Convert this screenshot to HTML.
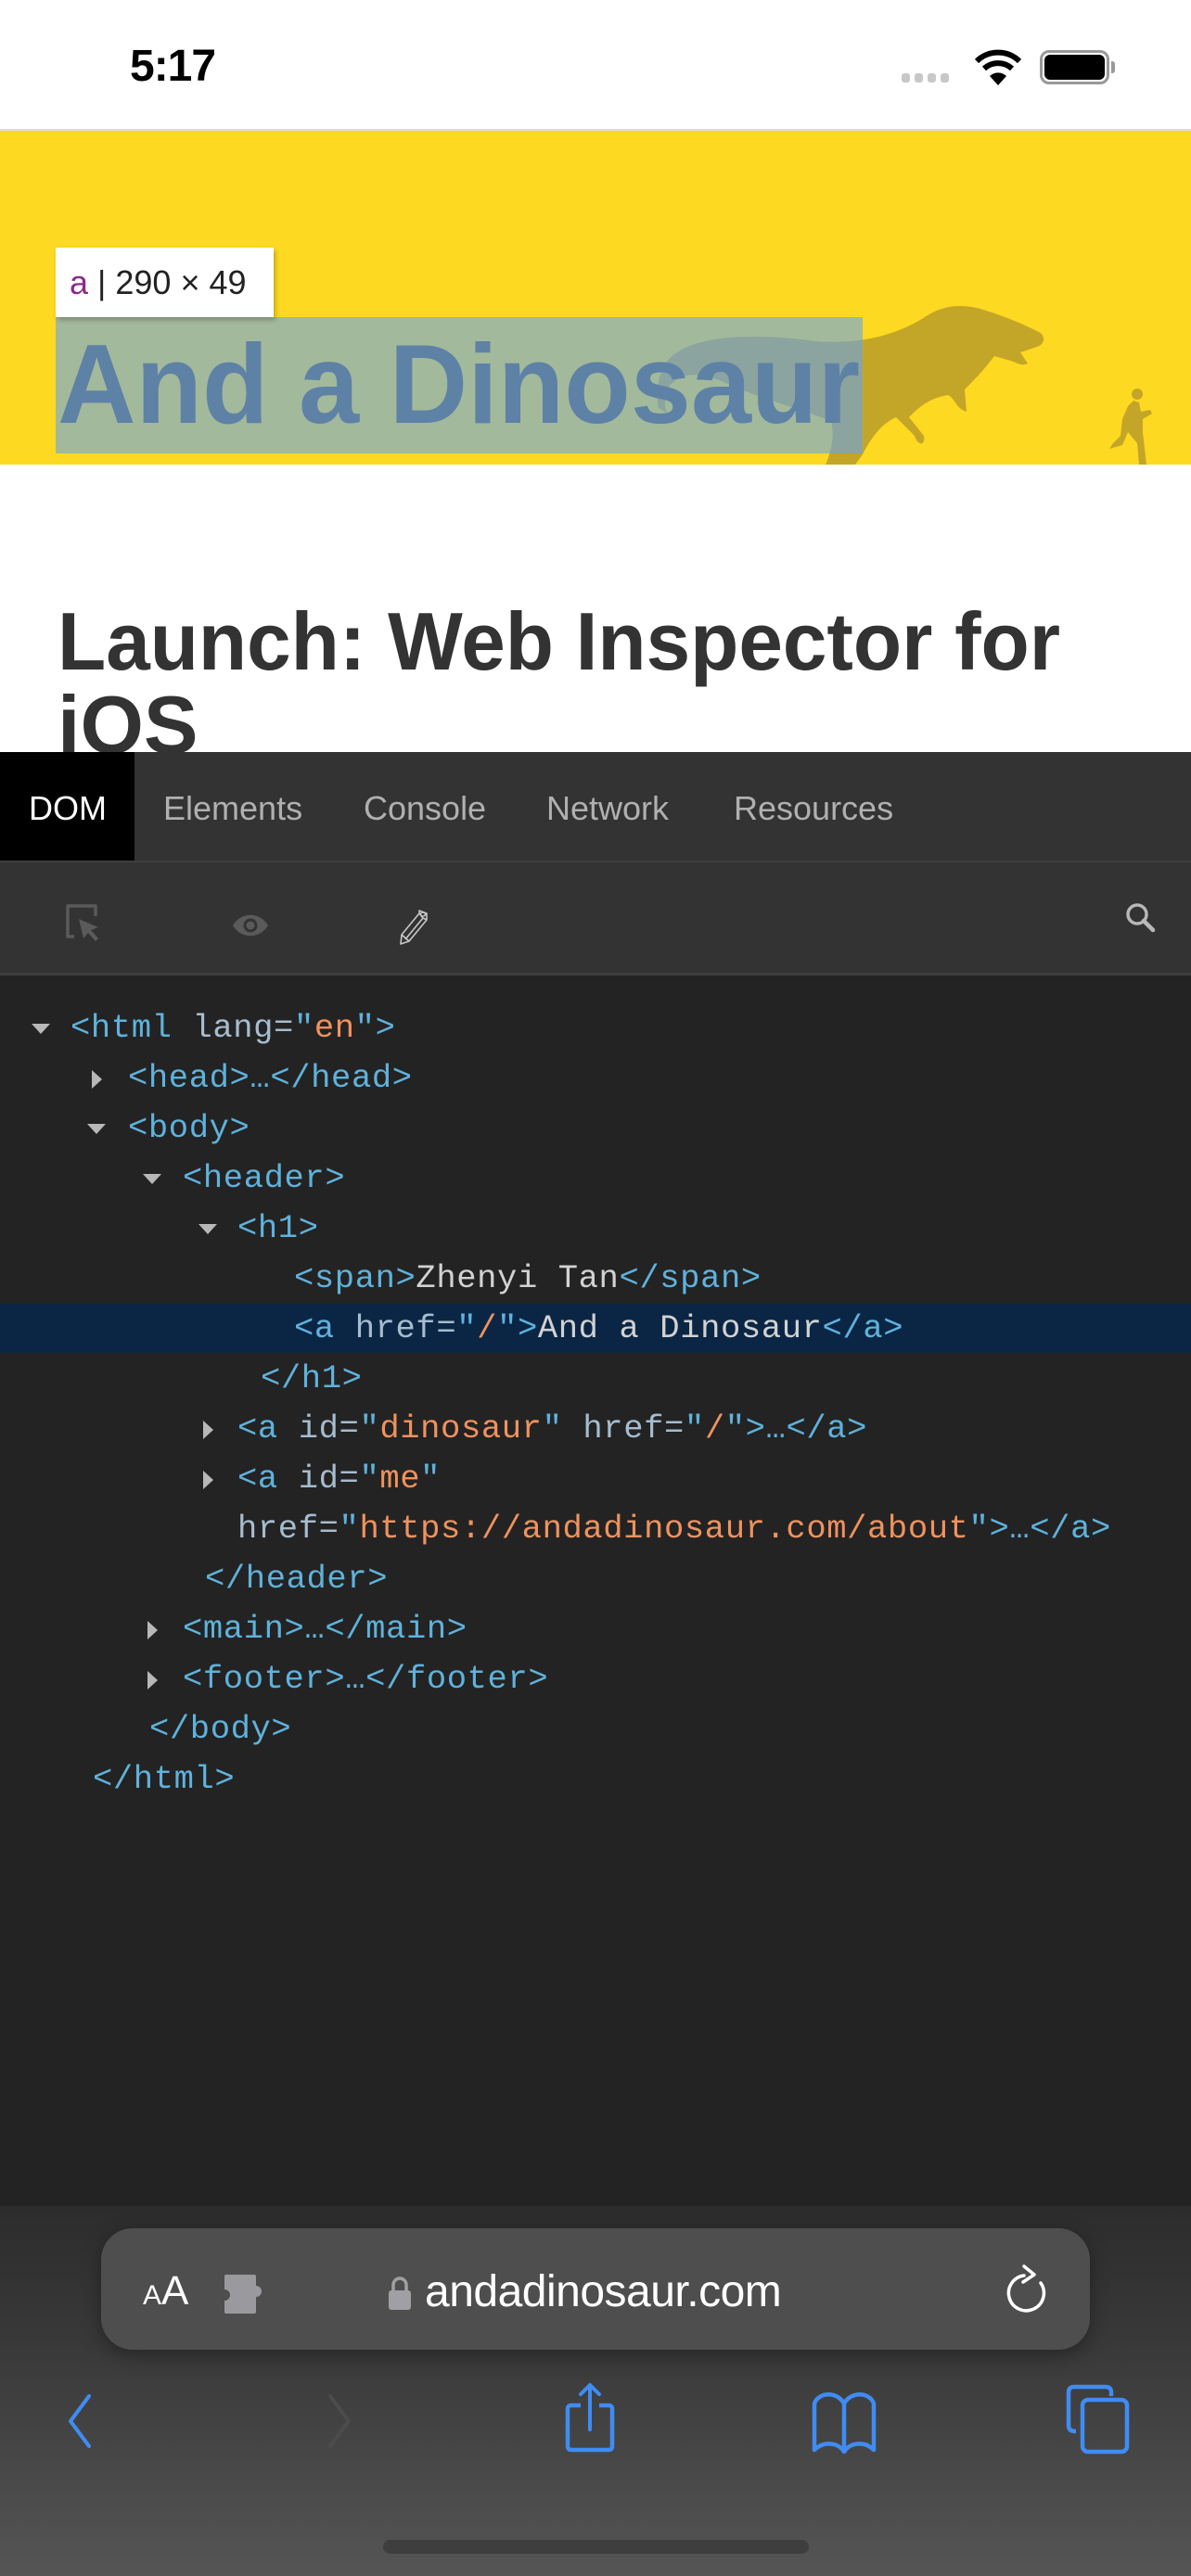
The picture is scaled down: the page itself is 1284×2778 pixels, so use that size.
<!DOCTYPE html>
<html><head><meta charset="utf-8">
<style>
*{margin:0;padding:0;box-sizing:border-box}
body{width:1284px;height:2778px;position:relative;overflow:hidden;background:#fff;font-family:"Liberation Sans",sans-serif}
.abs{position:absolute}
.mono{font-family:"Liberation Mono",monospace;font-size:35.5px;letter-spacing:0.6px;white-space:pre;color:#5fb2dc;position:absolute;line-height:54px}
.t{color:#5fb2dc}.n{color:#a6bccf}.v{color:#f0925e}.x{color:#d2d2d2}
.tri{position:absolute;width:0;height:0}
.down{border-left:10px solid transparent;border-right:10px solid transparent;border-top:11px solid #b8b8b8}
.right{border-top:10px solid transparent;border-bottom:10px solid transparent;border-left:11px solid #b8b8b8}
</style></head><body>
<!-- status bar -->
<div class="abs" style="left:140px;top:44px;font-size:48px;font-weight:bold;color:#000;letter-spacing:-1px">5:17</div>
<div class="abs" style="left:972px;top:79px;width:9px;height:10px;border-radius:3px;background:#c8c8c8"></div>
<div class="abs" style="left:986px;top:79px;width:9px;height:10px;border-radius:3px;background:#c8c8c8"></div>
<div class="abs" style="left:1000px;top:79px;width:9px;height:10px;border-radius:3px;background:#c8c8c8"></div>
<div class="abs" style="left:1014px;top:79px;width:9px;height:10px;border-radius:3px;background:#c8c8c8"></div>
<svg class="abs" style="left:1050px;top:52px" width="52" height="40" viewBox="0 0 52 40"><path d="M3 14 A33 33 0 0 1 49 14" stroke="#000" stroke-width="6" fill="none"/><path d="M11 22 A22 22 0 0 1 41 22" stroke="#000" stroke-width="6" fill="none"/><path d="M26 40 L17 30 A13 13 0 0 1 35 30 Z" fill="#000"/></svg>
<div class="abs" style="left:1121px;top:54px;width:75px;height:37px;border:3px solid #999;border-radius:10px"></div>
<div class="abs" style="left:1126px;top:59px;width:65px;height:27px;background:#000;border-radius:6px"></div>
<div class="abs" style="left:1198px;top:66px;width:4px;height:13px;background:#999;border-radius:0 3px 3px 0"></div>

<!-- yellow header -->
<div class="abs" style="left:0;top:139px;width:1284px;height:2px;background:#ddd"></div>
<div class="abs" style="left:0;top:141px;width:1284px;height:360px;background:#fed921"></div>
<svg class="abs" style="left:700px;top:320px" width="584" height="181" viewBox="0 0 584 181">
<path d="M30 60 C60 40 120 40 180 48 C230 52 270 40 300 20 C320 8 340 8 360 14 C380 20 400 28 420 38 C428 42 426 52 418 54 L400 60 L408 72 C400 76 396 70 386 68 L372 64 C360 80 350 90 340 100 L342 124 C330 120 330 110 322 106 C300 110 290 120 280 130 L296 150 C298 160 290 162 286 150 L266 130 C252 136 240 150 230 170 L222 181 L190 181 C196 168 200 150 196 134 C160 120 120 110 80 92 C56 82 36 80 22 96 C18 110 14 118 20 126 L10 120 C6 100 10 72 30 60Z" fill="#c3a628"/>
<path d="M528 181 L526 158 L516 146 L510 160 L496 164 L500 158 L508 150 L510 132 L516 118 L522 112 L528 114 L530 124 L540 122 L542 126 L532 132 L532 146 L536 181Z" fill="#c3a628"/>
<circle cx="526" cy="105" r="6" fill="#c3a628"/>
</svg>
<div class="abs" style="left:60px;top:342px;width:870px;height:147px;background:rgba(101,164,238,0.6)"></div>
<svg class="abs" style="left:60px;top:342px" width="870" height="147"><text x="2" y="114" font-family="Liberation Sans" font-weight="bold" font-size="122" fill="#5e82a6" textLength="865" lengthAdjust="spacingAndGlyphs">And a Dinosaur</text></svg>
<div class="abs" style="left:60px;top:267px;width:235px;height:75px;background:#fff;box-shadow:2px 3px 5px rgba(0,0,0,0.25)"></div>
<div class="abs" style="left:75px;top:284px;font-size:36px;color:#222;white-space:pre"><span style="color:#8a2a8a">a</span> | 290 × 49</div>

<!-- article heading -->
<svg class="abs" style="left:0;top:600px" width="1284" height="212"><text x="62" y="122" font-family="Liberation Sans" font-weight="bold" font-size="88" fill="#333" textLength="1081" lengthAdjust="spacingAndGlyphs">Launch: Web Inspector for</text><text x="62" y="212" font-family="Liberation Sans" font-weight="bold" font-size="88" fill="#333">iOS</text></svg>

<!-- tab bar -->
<div class="abs" style="left:0;top:811px;width:1284px;height:119px;background:#333"></div>
<div class="abs" style="left:0;top:811px;width:145px;height:117px;background:#000"></div>
<div class="abs" style="left:0;top:928px;width:1284px;height:2px;background:#3e3e3e"></div>
<div class="abs" style="left:31px;top:851px;font-size:36px;color:#fff">DOM</div>
<div class="abs" style="left:176px;top:851px;font-size:36px;color:#b0b0b0">Elements</div>
<div class="abs" style="left:392px;top:851px;font-size:36px;color:#b0b0b0">Console</div>
<div class="abs" style="left:589px;top:851px;font-size:36px;color:#b0b0b0">Network</div>
<div class="abs" style="left:791px;top:851px;font-size:36px;color:#b0b0b0">Resources</div>

<!-- toolbar -->
<div class="abs" style="left:0;top:930px;width:1284px;height:119px;background:#333"></div>
<div class="abs" style="left:0;top:1049px;width:1284px;height:3px;background:#3d3d3d"></div>
<svg class="abs" style="left:70px;top:974px" width="42" height="44" viewBox="0 0 42 44"><path d="M10 36 H3 V3 H33 V14" stroke="#5a5a5a" stroke-width="3.5" fill="none" stroke-linejoin="round"/><path d="M15 17 L36 26 L28 29 L36 38 L33 41 L25 32 L20 38Z" fill="#5a5a5a"/></svg>
<svg class="abs" style="left:250px;top:981px" width="40" height="34" viewBox="0 0 40 34"><path d="M1 17 C10 2 30 2 39 17 C30 32 10 32 1 17Z" fill="#5a5a5a"/><circle cx="20" cy="17" r="7.5" fill="#333"/><circle cx="20" cy="17" r="4.5" fill="#5a5a5a"/></svg>
<svg class="abs" style="left:430px;top:980px" width="34" height="40" viewBox="0 0 34 40"><g stroke="#c8c8c8" stroke-width="1.6" fill="none" stroke-linejoin="round"><path d="M22 2 L30 5 L30 12 L11 35 L2 38 L3 28 L22 5Z"/><path d="M22 5 L26 10 L7 33"/><path d="M30 12 L26 10"/><path d="M3 28 L11 35"/><ellipse cx="26" cy="6" rx="2.5" ry="2"/></g></svg>
<svg class="abs" style="left:1210px;top:970px" width="40" height="40" viewBox="0 0 40 40"><circle cx="16" cy="16" r="10" stroke="#b8b8b8" stroke-width="3.5" fill="none"/><path d="M23 23 L33 33" stroke="#b8b8b8" stroke-width="4.5" stroke-linecap="round"/></svg>

<!-- DOM tree -->
<div class="abs" style="left:0;top:1052px;width:1284px;height:1327px;background:#232323"></div>
<div class="abs" style="left:0;top:1406px;width:1284px;height:53px;background:#0b2645"></div>
<div class="tri down" style="left:34px;top:1104px"></div>
<div class="mono" style="left:76px;top:1082px"><span class="t">&lt;html </span><span class="n">lang=</span><span class="t">"</span><span class="v">en</span><span class="t">"&gt;</span></div>
<div class="tri right" style="left:99px;top:1154px"></div>
<div class="mono" style="left:138px;top:1136px">&lt;head&gt;…&lt;/head&gt;</div>
<div class="tri down" style="left:94px;top:1212px"></div>
<div class="mono" style="left:138px;top:1190px">&lt;body&gt;</div>
<div class="tri down" style="left:154px;top:1266px"></div>
<div class="mono" style="left:197px;top:1244px">&lt;header&gt;</div>
<div class="tri down" style="left:214px;top:1320px"></div>
<div class="mono" style="left:256px;top:1298px">&lt;h1&gt;</div>
<div class="mono" style="left:317px;top:1352px">&lt;span&gt;<span class="x">Zhenyi Tan</span>&lt;/span&gt;</div>
<div class="mono" style="left:317px;top:1406px">&lt;a <span class="n">href=</span>"<span class="v">/</span>"&gt;<span class="x">And a Dinosaur</span>&lt;/a&gt;</div>
<div class="mono" style="left:281px;top:1460px">&lt;/h1&gt;</div>
<div class="tri right" style="left:219px;top:1532px"></div>
<div class="mono" style="left:256px;top:1514px">&lt;a <span class="n">id=</span>"<span class="v">dinosaur</span>" <span class="n">href=</span>"<span class="v">/</span>"&gt;…&lt;/a&gt;</div>
<div class="tri right" style="left:219px;top:1586px"></div>
<div class="mono" style="left:256px;top:1568px">&lt;a <span class="n">id=</span>"<span class="v">me</span>"</div>
<div class="mono" style="left:256px;top:1622px"><span class="n">href=</span>"<span class="v">https://andadinosaur.com/about</span>"&gt;…&lt;/a&gt;</div>
<div class="mono" style="left:221px;top:1676px">&lt;/header&gt;</div>
<div class="tri right" style="left:159px;top:1748px"></div>
<div class="mono" style="left:197px;top:1730px">&lt;main&gt;…&lt;/main&gt;</div>
<div class="tri right" style="left:159px;top:1802px"></div>
<div class="mono" style="left:197px;top:1784px">&lt;footer&gt;…&lt;/footer&gt;</div>
<div class="mono" style="left:161px;top:1838px">&lt;/body&gt;</div>
<div class="mono" style="left:100px;top:1892px">&lt;/html&gt;</div>

<!-- bottom safari bar -->
<div class="abs" style="left:0;top:2379px;width:1284px;height:399px;background:linear-gradient(#2c2c2c,#3a3a3a 40%,#555)"></div>
<div class="abs" style="left:109px;top:2403px;width:1066px;height:131px;border-radius:34px;background:#4e4e4e;box-shadow:0 6px 20px rgba(0,0,0,0.35)"></div>
<div class="abs" style="left:154px;top:2446px;color:#fff;white-space:pre"><span style="font-size:30px">A</span><span style="font-size:44px">A</span></div>
<svg class="abs" style="left:240px;top:2451px" width="48" height="46" viewBox="0 0 48 46"><path d="M2 4 Q2 2 4 2 H34 Q36 2 36 4 V14 A6 6 0 1 1 36 26 V42 Q36 44 34 44 H4 Q2 44 2 42 V30 A5 5 0 1 0 2 18Z" fill="#9a9a9e"/></svg>
<svg class="abs" style="left:418px;top:2455px" width="26" height="36" viewBox="0 0 26 36"><path d="M6 16 V9 A7 7 0 0 1 20 9 V16" stroke="#a0a0a4" stroke-width="3.5" fill="none"/><rect x="1" y="15" width="24" height="21" rx="3" fill="#a0a0a4"/></svg>
<div class="abs" style="left:458px;top:2444px;font-size:48px;color:#fff;letter-spacing:-0.5px">andadinosaur.com</div>
<svg class="abs" style="left:1084px;top:2436px" width="50" height="62" viewBox="0 0 50 62"><path d="M20 18 A19 19 0 1 0 38 26" stroke="#fff" stroke-width="3.5" fill="none" stroke-linecap="round"/><path d="M20 8 L31 17 L19 25" stroke="#fff" stroke-width="3.5" fill="none" stroke-linecap="round" stroke-linejoin="round"/></svg>

<svg class="abs" style="left:66px;top:2580px" width="40" height="62" viewBox="0 0 40 62"><path d="M30 4 L10 31 L30 58" stroke="#3f8cf3" stroke-width="4" fill="none" stroke-linecap="round" stroke-linejoin="round"/></svg>
<svg class="abs" style="left:346px;top:2580px" width="40" height="62" viewBox="0 0 40 62"><path d="M10 4 L30 31 L10 58" stroke="#4c4c4c" stroke-width="4" fill="none" stroke-linecap="round" stroke-linejoin="round"/></svg>
<svg class="abs" style="left:606px;top:2568px" width="62" height="80" viewBox="0 0 62 80"><path d="M20 26 H10 Q6 26 6 30 V70 Q6 74 10 74 H50 Q54 74 54 70 V30 Q54 26 50 26 H40" stroke="#3f8cf3" stroke-width="4.5" fill="none"/><path d="M30 4 V52 M20 14 L30 4 L40 14" stroke="#3f8cf3" stroke-width="4" fill="none" stroke-linecap="round" stroke-linejoin="round"/></svg>
<svg class="abs" style="left:872px;top:2578px" width="76" height="70" viewBox="0 0 76 70"><path d="M38 14 C30 0 10 2 6 14 V64 C16 54 32 56 38 66 C44 56 60 54 70 64 V14 C66 2 46 0 38 14Z M38 14 V66" stroke="#3f8cf3" stroke-width="4.5" fill="none" stroke-linejoin="round"/></svg>
<svg class="abs" style="left:1148px;top:2570px" width="72" height="80" viewBox="0 0 72 80"><path d="M12 52 Q4 52 4 46 V10 Q4 4 10 4 H44 Q50 4 50 10 V14" stroke="#3f8cf3" stroke-width="4.5" fill="none"/><rect x="19" y="18" width="48" height="56" rx="6" stroke="#3f8cf3" stroke-width="4.5" fill="none"/></svg>
<div class="abs" style="left:413px;top:2739px;width:459px;height:15px;border-radius:8px;background:#3e3e3e"></div>
</body></html>
